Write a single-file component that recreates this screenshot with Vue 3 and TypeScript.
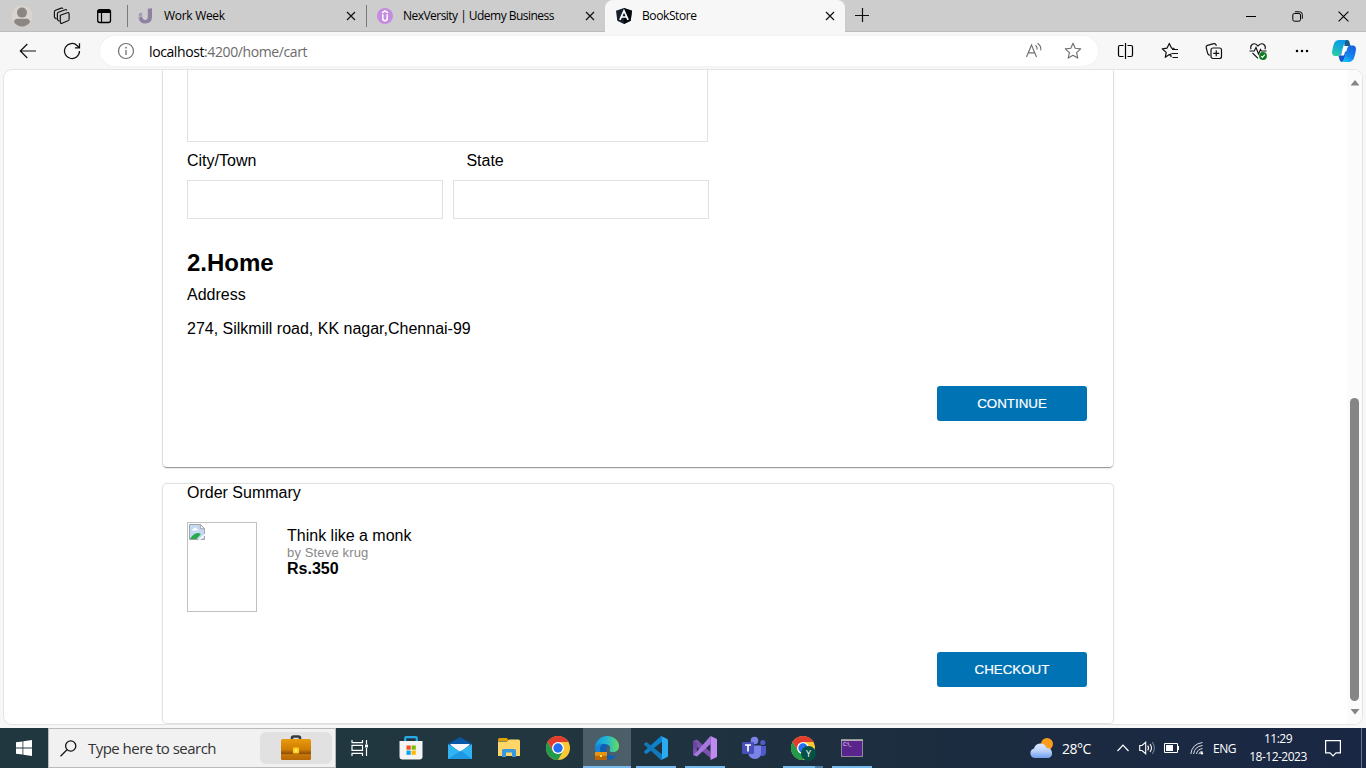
<script setup lang="ts">
interface Tab {
  title: string
  icon: 'work' | 'udemy' | 'angular'
  active: boolean
}

const tabs: Tab[] = [
  { title: 'Work Week', icon: 'work', active: false },
  { title: 'NexVersity | Udemy Business', icon: 'udemy', active: false },
  { title: 'BookStore', icon: 'angular', active: true },
]
</script>

<template>
  <div class="desktop">
    <header class="tabbar">
      <div class="cell c44">
        <svg width="22" height="22" viewBox="0 0 22 22">
          <circle cx="11" cy="11" r="10.6" fill="#d9d4d0" />
          <circle cx="11" cy="7.6" r="5" fill="#8b8681" />
          <path d="M3 17.2c0-2.2 1.300-3.400 3.300-3.400h9.400c2 0 3.300 1.200 3.300 3.400-1.800 2.700-4.700 4.200-8 4.200s-6.200-1.500-8-4.200z" fill="#8b8681" />
        </svg>
      </div>
      <div class="cell c36">
        <svg width="18" height="18" viewBox="0 0 18 18" fill="none" stroke="#111" stroke-width="1.15" stroke-linejoin="round">
          <path d="M7.300 8.200l7-2.400q1.800-.5 1.800 1.200v5.200q0 1.200-1.200 1.600l-5.800 2.400q-1.800.6-1.800-1.200z" />
          <path d="M6.500 14.300l-1.200-.7q-.9-.5-.9-1.500V6.800q0-1.200 1.100-1.600l6.700-2.400q1.200-.4 1.600.6" />
          <path d="M3.600 12.100l-1.300-.8q-.9-.5-.9-1.500V4.900q0-1.200 1.100-1.600l5.800-2.200q1.200-.4 1.700.5" />
        </svg>
      </div>
      <div class="cell c47">
        <svg width="16" height="16" viewBox="0 0 16 16">
          <rect x="1.700" y="1.700" width="12.800" height="12.800" rx="2" fill="none" stroke="#000" stroke-width="1.300" />
          <path d="M1.500 5V3.500q0-2 2-2h9q2 0 2 2V5z" />
          <path d="M5.500 5v9.500" stroke="#000" stroke-width="1.200" />
        </svg>
      </div>
      <div
        v-for="tab in tabs"
        :key="tab.title"
        class="tab"
        :class="[{ active: tab.active }, tab.icon]"
      >
        <svg v-if="tab.icon === 'work'" class="favicon" width="16" height="16" viewBox="0 0 16 16">
          <path d="M9.800 .7L14 .2v8.300q0 7-6.700 7Q1.300 15.500.6 9.500L4.300 8.700Q4.700 12 7.300 12q2.500 0 2.500-3.200z" fill="#8f82a0" />
          <path d="M.9 5.200l3.300-.7v4.300H.6z" fill="#a79db2" />
        </svg>
        <svg v-else-if="tab.icon === 'udemy'" class="favicon" width="16" height="16" viewBox="0 0 16 16">
          <circle cx="8" cy="8" r="8" fill="#c58be0" />
          <path d="M5 4.800l3-1.900 3 1.900M5.800 6.300v4.300q0 2.200 2.200 2.200t2.200-2.200V6.300" fill="none" stroke="#fff" stroke-width="1.500" />
        </svg>
        <svg v-else class="favicon" width="16" height="16" viewBox="0 0 16 16">
          <path d="M8 0l8 2.700-1.300 10L8 16l-6.700-3.300L0 2.700z" fill="#16202c" />
          <path d="M8 0l8 2.700-1.300 10L8 16z" fill="#05090f" />
          <path d="M3.900 11.800L8 2.700l4.100 9.100M5.700 9h4.600" fill="none" stroke="#fff" stroke-width="1.700" />
        </svg>
        <span class="title">{{ tab.title }}</span>
        <svg class="close" width="10" height="10" viewBox="0 0 10 10">
          <path d="M1 1l8 8M9 1l-8 8" stroke="#111" stroke-width="1.200" />
        </svg>
      </div>
      <svg class="plus" width="14" height="14" viewBox="0 0 14 14">
        <path d="M7.500 0v14M0 7.500h14" stroke="#111" stroke-width="1.200" />
      </svg>
      <div class="window-controls">
        <div class="cell c46">
          <svg width="10" height="10" viewBox="0 0 10 10"><path d="M0 5.500h10" stroke="#000" /></svg>
        </div>
        <div class="cell c46">
          <svg width="11" height="11" viewBox="0 0 11 11" fill="none" stroke="#000">
            <rect x=".8" y="2.500" width="7.700" height="7.700" rx="1.600" />
            <path d="M3 .8h4.500q2.800 0 2.800 2.800v4.200" />
          </svg>
        </div>
        <div class="cell c46">
          <svg width="11" height="11" viewBox="0 0 11 11"><path d="M.6 .6l9.800 9.800M10.400 .6L.6 10.400" stroke="#000" stroke-width="1.100" /></svg>
        </div>
      </div>
    </header>

    <nav class="toolbar">
      <div class="cell c44">
        <svg width="18" height="16" viewBox="0 0 18 16" fill="none" stroke="#111" stroke-width="1.200">
          <path d="M17 8H1.500M8.300 1L1.300 8l7 7" />
        </svg>
      </div>
      <div class="cell c44">
        <svg width="18" height="18" viewBox="0 0 18 18" fill="none" stroke="#111" stroke-width="1.250">
          <path d="M16.500 9a7.500 7.500 0 1 1-2.200-5.300l2 2M16.500 1.200v4.600h-4.600" />
        </svg>
      </div>
      <div class="omnibox">
        <svg class="info" width="18" height="18" viewBox="0 0 18 18">
          <circle cx="9" cy="9" r="7.500" fill="none" stroke="#707070" stroke-width="1.200" />
          <path d="M9 8v5" stroke="#707070" stroke-width="1.300" />
          <circle cx="9" cy="5.700" r=".9" fill="#707070" />
        </svg>
        <span class="url"><b>localhost</b>:4200/home/cart</span>
        <svg class="read" width="18" height="18" viewBox="0 0 18 18" fill="none" stroke="#707070" stroke-width="1.150">
          <path d="M1.500 15L6.500 3 11.500 15M3.300 10.900h6.400" />
          <path d="M10.500 3.200q2 1.800 1.600 4.500M12.600 1.200q4 3 3.100 7.200" />
        </svg>
        <svg class="star" width="18" height="18" viewBox="0 0 18 18" fill="none" stroke="#707070" stroke-width="1.150" stroke-linejoin="round">
          <path d="M9 1.300l2.200 5 5.500.6-4.100 3.700 1.200 5.500L9 13.300l-4.800 2.800 1.200-5.500-4.100-3.700 5.500-.6z" />
        </svg>
      </div>
      <div class="actions">
        <div class="cell c44">
          <svg width="18" height="18" viewBox="0 0 18 18" fill="none" stroke="#000" stroke-width="1.200">
            <path d="M6.500 3.500H3q-1.500 0-1.500 1.500v8q0 1.500 1.500 1.500h3.500M10.500 3.500H14q1.500 0 1.500 1.500v8q0 1.500-1.500 1.500h-3.500M8.500 1v16" />
          </svg>
        </div>
        <div class="cell c44">
          <svg width="18" height="18" viewBox="0 0 18 18" fill="none" stroke="#111" stroke-width="1.200" stroke-linejoin="round">
            <path d="M11 7.500h6M10.500 11.500h6.500M11.500 15.500h5.500" />
            <path d="M9.300 13.100l-1-.5-4 2.700.9-4.900L1.200 6.800l4.900-.7 2.200-4.700 2.200 4.700 3 .4M9.600 11.700l.5 3.400" />
          </svg>
        </div>
        <div class="cell c44">
          <svg width="18" height="18" viewBox="0 0 18 18" fill="none" stroke="#111" stroke-width="1.200">
            <rect x="6" y="6" width="10.500" height="10.500" rx="2" />
            <path d="M11.250 8.300v6M8.250 11.300h6M4.800 13.300Q3 13 2.600 11.200L1.200 5.600q-.4-1.800 1.300-2.300L8.700 1.600q1.800-.4 2.300 1.200l.3 1" />
          </svg>
        </div>
        <div class="cell c44">
          <svg width="18" height="18" viewBox="0 0 18 18" fill="none" stroke="#111" stroke-width="1.100">
            <path d="M2 7.200C.6 3.600 4.100.5 7.200 2.400L9 4l1.800-1.600C13.900.5 17.400 3.600 16 7.200M3.500 11l5.500 5.300" />
            <path d="M.5 9h4.800l1.700-3.500L9.500 12l2-4.500.8 1.500h5.200" />
            <circle cx="14" cy="14" r="3.900" fill="#107c1f" stroke="none" />
            <path d="M12.200 14.200l1.200 1.200 2.400-2.700" stroke="#fff" />
          </svg>
        </div>
        <div class="cell c44">
          <svg width="14" height="4" viewBox="0 0 14 4"><circle cx="2" cy="2" r="1.250" /><circle cx="7" cy="2" r="1.250" /><circle cx="12" cy="2" r="1.250" /></svg>
        </div>
        <div class="cell c40">
          <svg width="24" height="24" viewBox="0 0 24 24">
            <defs>
              <linearGradient id="cpA" x1="0.600" y1="0" x2="0.200" y2="1"><stop offset="0" stop-color="#0a9ae8" /><stop offset=".5" stop-color="#18aed0" /><stop offset="1" stop-color="#28d19a" /></linearGradient>
              <linearGradient id="cpB" x1="0.800" y1="0" x2="0.300" y2="1"><stop offset="0" stop-color="#1560e0" /><stop offset=".6" stop-color="#1482ef" /><stop offset="1" stop-color="#12c3f8" /></linearGradient>
            </defs>
            <path d="M12 1h3.500q1.300 0 1.800 1.500L18.500 7h-6z" fill="#155c91" />
            <path d="M7 1h7.500q-1.600 1-2.300 3.500L9.200 14.500Q8.400 17 5.500 17H3q-3-.3-3-4 .5-4 2-8.500Q3.500 1.300 7 1z" fill="url(#cpA)" />
            <path d="M6.500 17q2.200-.3 2.900-2.700L10 12.500h4.500L12.300 20q-.9 2.800-2.300 3-1.700 0-2.300-2z" fill="#1357ce" />
            <path d="M17 23H9.800q1.700-1 2.400-3.500l3-10Q16 6.500 18.500 6.500H21q3 .3 3 4-.5 4-2 8.500-1.500 3.700-5 4z" fill="url(#cpB)" />
            <path d="M11.800 7.500h3.700q-.8.700-1.200 2l-2.400 7H8.500q.7-.8 1.100-2z" fill="#fff" />
          </svg>
        </div>
      </div>
    </nav>

    <main class="viewport">
      <div class="page">
        <section class="card details">
          <div class="textarea"></div>
          <div class="labels"><span>City/Town</span><span>State</span></div>
          <div class="inputs"><div class="input"></div><div class="input"></div></div>
          <h2>2.Home</h2>
          <p class="address-label">Address</p>
          <p class="address">274, Silkmill road, KK nagar,Chennai-99</p>
          <button type="button">CONTINUE</button>
        </section>

        <section class="card summary">
          <p class="heading">Order Summary</p>
          <div class="item">
            <div class="cover">
              <svg width="16" height="16" viewBox="0 0 16 16">
                <path d="M.5 .5h10.800l4.200 4.200v10.800H.5z" fill="#c5d9f5" stroke="#a0a4a8" />
                <path d="M11.300 .5v4.200h4.200z" fill="#fff" stroke="#a0a4a8" />
                <path d="M3 6.500q0-1.500 1.400-1.500Q5 3 6.500 3.700 8 4 7.800 5.200 9 5.200 9 6.500z" fill="#fff" />
                <path d="M1 15l2-3q4.500-5 9-2l-4.500 5z" fill="#27ab48" />
                <path d="M9 16l7-6.500v2L11.200 16z" fill="#fff" />
              </svg>
            </div>
            <div class="info-text">
              <p class="name">Think like a monk</p>
              <p class="author">by Steve krug</p>
              <p class="price">Rs.350</p>
            </div>
          </div>
          <button type="button">CHECKOUT</button>
        </section>
      </div>
      <div class="scrollbar">
        <svg width="10" height="6" viewBox="0 0 10 6"><path d="M5 0l4.500 5.500h-9z" fill="#858585" /></svg>
        <div class="thumb"></div>
        <svg width="10" height="6" viewBox="0 0 10 6"><path d="M5 5.500L.5 0h9z" fill="#858585" /></svg>
      </div>
    </main>

    <footer class="taskbar">
      <div class="cell c48">
        <svg width="16" height="16" viewBox="0 0 16 16" fill="#fff"><path d="M0 2.300l6.500-.9v6.100H0zM7.300 1.300L16 0v7.500H7.300zM0 8.400h6.500v6.200L0 13.700zM7.300 8.400H16V16l-8.700-1.200z" /></svg>
      </div>
      <div class="search">
        <svg class="lens" width="17" height="17" viewBox="0 0 17 17" fill="none" stroke="#111" stroke-width="1.300"><circle cx="10.700" cy="6" r="5.100" /><path d="M7 9.800L.5 16.300" /></svg>
        <span class="placeholder">Type here to search</span>
        <div class="bag">
          <svg width="30" height="26" viewBox="0 0 30 26">
            <defs><linearGradient id="bagFill" x1="0" y1="0" x2="0" y2="1"><stop offset="0" stop-color="#e99a0c" /><stop offset=".5" stop-color="#cf7d05" /><stop offset=".72" stop-color="#8b4a05" /><stop offset=".74" stop-color="#c77a09" /><stop offset="1" stop-color="#b66705" /></linearGradient></defs>
            <path d="M11 5V3q0-1.500 1.500-1.500h5Q19 1.500 19 3v2" fill="none" stroke="#383c44" stroke-width="2.600" />
            <rect y="4" width="30" height="21" rx="1.500" fill="url(#bagFill)" />
            <rect x="12" y="12.500" width="6" height="6" rx="1" fill="#ffd11c" /><rect x="14" y="14.500" width="2" height="2" fill="#fff2a0" />
          </svg>
        </div>
      </div>
      <div class="cell c51 task-view">
        <svg width="18" height="16" viewBox="0 0 18 16" fill="none" stroke="#fff" stroke-width="1.200">
          <path d="M1 0v2.600h10.500V0M1 16v-2.600h10.500V16M1 5.400h10.500v5H1zM15.500 0v4M15.500 8v8" /><rect x="14" y="4.500" width="3" height="3" fill="#fff" stroke="none" />
        </svg>
      </div>
      <div class="apps">
        <div class="app">
          <svg width="24" height="24" viewBox="0 0 24 24">
            <path d="M6.200 6V2.200Q6.200 1.200 7.200 1.200h9.600q1 0 1 1V6" fill="none" stroke="#27a9e8" stroke-width="2.200" />
            <path d="M.5 5h23v15.500q0 3-3 3h-17q-3 0-3-3z" fill="#f4f4f4" />
            <path d="M7.500 9.500h4.200v4.200H7.500z" fill="#f25022" /><path d="M12.600 9.500h4.200v4.200h-4.200z" fill="#7fba00" /><path d="M7.500 14.600h4.200v4.200H7.500z" fill="#00a4ef" /><path d="M12.600 14.600h4.200v4.200h-4.200z" fill="#ffb900" />
          </svg>
        </div>
        <div class="app">
          <svg width="24" height="24" viewBox="0 0 24 24">
            <path d="M0 8L12 1l12 7-12 10z" fill="#0958a8" /><path d="M2 8.500h20l-10 8z" fill="#fff" />
            <path d="M0 8l12 7.500L24 8v15H0z" fill="#31b5f2" /><path d="M0 23l13-8.500L24 23z" fill="#1385d8" opacity=".6" />
            <path d="M2 8h20l-10 6.500z" fill="#f5f7fa" />
          </svg>
        </div>
        <div class="app">
          <svg width="22" height="20" viewBox="0 0 22 20">
            <path d="M0 1.500Q0 0 1.500 0H9l2 3H0z" fill="#e0a000" /><path d="M0 3.500h9L11 1.500h9.500q1.500 0 1.500 1.500v15H0z" fill="#ffd667" />
            <path d="M4 19v-6.500Q4 11 5.500 11h11q1.500 0 1.500 1.500V19h-4v-4.500H8V19z" fill="#3998de" />
          </svg>
        </div>
        <div class="app">
          <svg width="24" height="24" viewBox="0 0 24 24">
            <circle cx="12" cy="12" r="12" fill="#fcc934" /><path d="M1.600 6A12 12 0 0 1 22.400 6H12L6.800 15z" fill="#e33b2e" />
            <path d="M1.600 6l5.200 9q2 3 5.200 3l-.1 6A12 12 0 0 1 1.600 6z" fill="#219a4b" /><path d="M12 24l5.200-9L12 18q-3.200 0-5.200-3l3 8.800z" fill="#219a4b" />
            <circle cx="12" cy="12" r="6" fill="#fff" /><circle cx="12" cy="12" r="4.700" fill="#246ff0" />
          </svg>
        </div>
        <div class="app current">
          <svg width="24" height="24" viewBox="0 0 24 24">
            <defs><linearGradient id="edgeWave"><stop offset="0" stop-color="#1596df" /><stop offset=".5" stop-color="#24b8d0" /><stop offset="1" stop-color="#67dd5d" /></linearGradient></defs>
            <path d="M12 0C5 0 0 5.500 0 12c0 7 5 12 12 12 4.500 0 8-1.800 10-5-5 2-11 0-11-6 0-1.600.8-3 2-3.600z" fill="#0c60b5" />
            <path d="M0 12C0 5 5.500 0 12 0c7 0 12 4.500 12 10 0 4-3 6-6 6-2.500 0-4-.8-3.500-1.800C16.500 11.500 14 8 9.500 8 5 8 1 9.500 0 12z" fill="url(#edgeWave)" />
            <path d="M0 12c1-3 4-4.200 8-4.200-3 2-4 6-2 10l-4 1C.7 17 0 14.500 0 12z" fill="#1b83d6" />
            <path d="M13.500 9.600q1.700 1.900.8 4.800-.4 1.500 2.500 1.800-3.600 1.300-5.300-1.700-1-3.200 2-4.900z" fill="#4c5f68" />
            <rect y="16" width="12" height="8" fill="#e79411" /><path d="M0 19.800h12V24H0z" fill="#b96605" /><rect x="5" y="19" width="2" height="2" fill="#ffe052" />
          </svg>
        </div>
        <div class="app running">
          <svg width="24" height="24" viewBox="0 0 24 24">
            <path d="M17 0l1 .2v5.600L3 17.500q-1 .7-1.700 0L.3 16.400q-.6-.7.200-1.400z" fill="#0b83ce" /><path d="M18 23.800l-1 .2L.5 9q-.8-.7-.2-1.400l1-1.100Q2 5.800 3 6.500l15 11.700z" fill="#1178bb" />
            <path d="M17 0l6 2.800q1 .5 1 1.500v15.400q0 1-1 1.500L17 24q1-.5 1-2V2q0-1.500-1-2z" fill="#29aaf2" />
          </svg>
        </div>
        <div class="app running">
          <svg width="24" height="24" viewBox="0 0 24 24">
            <path d="M0 5l4-1.600L17.500 16v6L3.800 10.800V17L0 19z" fill="#7952ae" /><path d="M17.500 0v8L4 20.600 0 19l3.500-3z" fill="#a776df" />
            <path d="M17.500 0L24 3v18l-6.500 3z" fill="#c08af1" /><path d="M3.800 10.700L0 14V5l3.800 2z" fill="#6a429f" />
          </svg>
        </div>
        <div class="app">
          <svg width="24" height="24" viewBox="0 0 24 24">
            <circle cx="20.800" cy="6.500" r="2.600" fill="#5059c9" /><circle cx="12.500" cy="4.500" r="3.800" fill="#7b83eb" />
            <path d="M17 10h7v6q0 4-4 4h-2z" fill="#5059c9" /><path d="M6 9.500h13v7q0 6.500-6 6.500t-7-6.500z" fill="#7b83eb" />
            <rect y="6" width="12" height="12" rx="1" fill="#4650b8" /><path d="M3 9h6M6 9v6.500" stroke="#fff" stroke-width="1.700" />
          </svg>
        </div>
        <div class="app running grouped">
          <svg width="26" height="26" viewBox="0 0 26 26">
            <circle cx="13" cy="13" r="12" fill="#fcc934" /><path d="M2.600 7A12 12 0 0 1 23.400 7H13L7.800 16z" fill="#e33b2e" />
            <path d="M2.600 7l5.200 9q2 3 5.200 3v6A12 12 0 0 1 2.600 7z" fill="#219a4b" /><circle cx="13" cy="13" r="6" fill="#fff" /><circle cx="13" cy="13" r="4.700" fill="#246ff0" />
            <circle cx="18.500" cy="18.500" r="7.500" fill="#035045" /><text x="18.500" y="21.800" text-anchor="middle" fill="#fff" font-size="9">Y</text>
          </svg>
        </div>
        <div class="app running">
          <svg width="22" height="18" viewBox="0 0 22 18">
            <rect x=".5" y="1.500" width="21" height="16" fill="#59258c" stroke="#8d8998" /><path d="M0 1h22" stroke="#bbb" stroke-width="1.500" />
            <text x="2" y="7" fill="#fff" font-size="5">C:\_</text>
          </svg>
        </div>
      </div>
      <div class="tray">
        <svg width="26" height="22" viewBox="0 0 26 22">
          <defs><linearGradient id="cloudFill" x1="0" y1="0" x2="0" y2="1"><stop offset="0" stop-color="#dce8ff" /><stop offset=".5" stop-color="#bdd1fa" /><stop offset="1" stop-color="#6f9fee" /></linearGradient></defs>
          <circle cx="18" cy="7" r="6" fill="#f99b1c" />
          <path d="M5.500 21a4.800 4.800 0 0 1-.5-9.400A6.500 6.500 0 0 1 17.500 11a5.200 5.200 0 0 1 2.300 10z" fill="url(#cloudFill)" />
        </svg>
        <span class="temperature">28°C</span>
        <svg class="chevron" width="12" height="8" viewBox="0 0 12 8" fill="none" stroke="#fff" stroke-width="1.200"><path d="M.5 7L6 1.200 11.500 7" /></svg>
        <svg class="volume" width="17" height="14" viewBox="0 0 17 14" fill="none" stroke="#fff" stroke-width="1.100">
          <path d="M.7 4.500H3l3.700-3.200v11.400L3 9.500H.7zM8.700 4.700q1.700 2.300 0 4.600M11 3q3 4 0 8" /><path d="M13.300 1q4.200 6 0 12" stroke="#718096" />
        </svg>
        <svg class="battery" width="16" height="10" viewBox="0 0 16 10"><path d="M.5 .5h13v9H.5zM14.500 3v4" fill="none" stroke="#fff" /><path d="M2 2h7v6H2z" fill="#fff" /></svg>
        <svg class="wifi" width="14" height="14" viewBox="0 0 14 14" fill="none" stroke="#dce2ea">
          <path d="M.8 13Q2 3 12.500 1.500M3.600 13Q4.500 5.500 12.500 4.500M6.500 13Q7 8.500 12.500 7.500M9 13q.3-2.300 3.500-2.700" /><circle cx="11.800" cy="12.200" r="1.300" fill="#fff" stroke="none" />
        </svg>
        <span class="lang">ENG</span>
        <div class="clock"><span>11:29</span><span>18-12-2023</span></div>
        <svg class="notice" width="16" height="17" viewBox="0 0 16 17" fill="none" stroke="#fff" stroke-width="1.200"><path d="M.6 .6h14.800v12.200H11l-3 3-3-3H.6z" /></svg>
      </div>
    </footer>
  </div>
</template>

<style>
html,
body {
  margin: 0;
  overflow: hidden;
}
</style>

<style scoped>
* { box-sizing: border-box; }
svg { display: block; flex: none; }
p, h2 { margin: 0; }

.desktop {
  width: 1366px;
  height: 768px;
  display: flex;
  flex-direction: column;
  overflow: hidden;
  background: #f7f7f7;
  font-family: "Open Sans", "Noto Sans", sans-serif;
  color: #000;
}

.cell { display: flex; align-items: center; justify-content: center; flex: none; }
.c36 { width: 36px; }
.c40 { width: 40px; }
.c44 { width: 44px; }
.c46 { width: 46px; }
.c47 { width: 47px; }
.c48 { width: 48px; }
.c51 { width: 51px; }

.tabbar {
  height: 32px;
  flex: none;
  display: flex;
  background: #cdcdcd;
  box-shadow: inset 0 -1px 0 #bcbcbc;
}
.tab {
  width: 239px;
  display: flex;
  align-items: center;
  padding: 0 10px;
  border-left: 1px solid transparent;
  font-size: 12px;
}
.tab.work, .tab.udemy {
  border-image: linear-gradient(transparent 6px, #7a7a7a 6px, #7a7a7a 26px, transparent 26px) 1;
  border-width: 0 0 0 1px;
  border-style: solid;
}
.tab.active {
  width: 240px;
  background: #f7f7f7;
  border-radius: 8px 8px 0 0;
}
.title { margin-left: 10px; white-space: nowrap; flex: 1; line-height: 32px; }
.work .title { letter-spacing: -0.3px; }
.udemy .title { letter-spacing: -0.53px; }
.angular .title { letter-spacing: -0.4px; }
.plus { margin: 8px 0 0 10px; }
.window-controls { display: flex; margin-left: auto; }

.toolbar {
  height: 37px;
  flex: none;
  display: flex;
  padding-left: 6px;
}
.omnibox {
  width: 998px;
  height: 30px;
  margin: 4px 6px 0;
  border-radius: 15px;
  background: #fff;
  display: flex;
  align-items: center;
  box-shadow: 0 0 2px #e9e9e9;
}
.info { margin-left: 17px; }
.url { margin-left: 14px; font-size: 14px; color: #6b6b6b; letter-spacing: -0.4px; flex: 1; }
.url b { font-weight: 400; color: #000; }
.read { margin-right: 21px; }
.star { margin-right: 16px; }
.actions { display: flex; }

.viewport {
  height: 656px;
  flex: none;
  margin: 0 3px;
  border: 1px solid #e4e4e4;
  border-radius: 9px;
  background: #fff;
  display: flex;
  overflow: hidden;
  font-family: "Liberation Sans", Arial, sans-serif;
  font-size: 16px;
}
.page {
  width: 1343px;
  display: flex;
  flex-direction: column;
  padding-left: 159px;
}
.card {
  width: 950px;
  flex: none;
  padding: 0 24px;
  display: flex;
  flex-direction: column;
  background: #fff;
  box-shadow: 0 2px 1px -1px rgba(0, 0, 0, 0.2), 0 1px 1px rgba(0, 0, 0, 0.14), 0 1px 3px rgba(0, 0, 0, 0.12), 0 0 0 1px rgba(0, 0, 0, 0.07);
}
.details { height: 397px; border-radius: 0 0 4px 4px; }
.textarea { width: 521px; height: 72px; border: 1px solid #e1e1e1; border-top: 0; }
.labels { display: grid; grid-template-columns: 279.4px 1fr; margin-top: 9px; line-height: 20px; }
.inputs { display: flex; gap: 10px; margin-top: 9px; }
.input { width: 256px; height: 39px; border: 1px solid #e1e1e1; }
h2 { margin-top: 30px; font-size: 24px; line-height: 28px; }
.address-label { margin-top: 8px; line-height: 20px; }
.address { margin-top: 14px; line-height: 20px; }
button {
  width: 150px;
  height: 35px;
  flex: none;
  align-self: flex-end;
  margin-right: 2px;
  padding: 0 0 1px;
  border: 0;
  border-radius: 3px;
  background: #0073b5;
  color: #fff;
  font-family: "Liberation Sans", Arial, sans-serif;
  font-size: 13.333px;
  -webkit-text-stroke: 0.2px #fff;
}
.details button { margin-top: 47px; }
.summary {
  height: 239px;
  margin-top: 17px;
  border-radius: 4px;
  box-shadow: 0 0 3px rgba(0, 0, 0, 0.12), 0 0 0 1px rgba(0, 0, 0, 0.08);
}
.heading { line-height: 18px; }
.item { display: flex; gap: 30px; margin-top: 20px; }
.cover { width: 70px; height: 90px; border: 1px solid #c0c0c0; padding: 1px; }
.info-text { padding-top: 5px; }
.name { line-height: 18px; }
.author { color: #878787; font-size: 13px; line-height: 15px; letter-spacing: 0.15px; }
.price { font-weight: 700; line-height: 18px; }
.summary button { margin-top: 40px; }

.scrollbar {
  width: 15px;
  background: #fbfbfb;
  display: flex;
  flex-direction: column;
  align-items: center;
  padding: 10px 0 9px;
}
.thumb { width: 9px; height: 303px; margin: auto 0 8px; border-radius: 5px; background: #858585; }

.taskbar {
  height: 40px;
  flex: none;
  margin-top: 3px;
  display: flex;
  color: #fff;
  background: linear-gradient(90deg, #20373f, #21363f 40%, #1c2c40 70%, #1a2744);
}
.search {
  width: 288px;
  display: flex;
  align-items: center;
  background: #f1f1f1;
  border: 1px solid #b9b9b9;
  color: #333;
}
.lens { margin-left: 11px; }
.placeholder { flex: 1; margin-left: 11px; font-size: 15px; letter-spacing: -0.53px; white-space: nowrap; }
.bag {
  width: 72px;
  height: 32px;
  margin-right: 3px;
  border-radius: 6px;
  background: #e1e1e1;
  display: flex;
  align-items: center;
  justify-content: center;
}
.task-view { padding-right: 3px; }
.apps { display: flex; gap: 1px; }
.app { width: 48px; display: flex; align-items: center; justify-content: center; }
.current { background: #4c5f68; box-shadow: inset 0 -2px 0 #76b9ed; }
.running {
  background: linear-gradient(#76b9ed, #76b9ed) center bottom / 40px 2px no-repeat;
}
.grouped {
  background: linear-gradient(90deg, #76b9ed 32px, #4e7fa8 32px) center bottom / 40px 2px no-repeat;
}

.tray { display: flex; align-items: center; margin-left: auto; width: 337px; font-size: 12px; }
.temperature { margin-left: 7px; width: 55px; font-size: 14px; letter-spacing: -0.5px; }
.volume { margin-left: 10px; }
.battery { margin-left: 8px; }
.wifi { margin-left: 10px; }
.lang { margin-left: 9px; width: 36px; letter-spacing: -0.5px; }
.clock { display: flex; flex-direction: column; align-items: center; width: 58px; line-height: 18px; white-space: nowrap; letter-spacing: -0.5px; }
.notice { margin-left: 18px; }
.tray::after { content: ""; width: 1px; height: 40px; margin-left: 20px; background: #66758a; }
</style>
